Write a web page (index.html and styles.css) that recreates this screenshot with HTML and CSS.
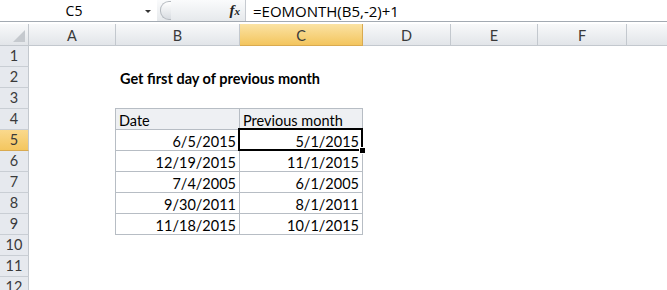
FILE: index.html
```html
<!DOCTYPE html>
<html lang="en">
  <head>
    <meta charset="UTF-8" />
    <title>EOMONTH - first day of previous month</title>
    <link rel="stylesheet" href="styles.css">
  </head>
  <body>
    <div class="formula-bar">
      <div class="name-box">
        <span class="ref">C5</span>
        <span class="arrow"></span>
      </div>
      <div class="fx-area">
        <span class="grip"></span>
        <span class="fx"><i>f</i><small>x</small></span>
      </div>
      <div class="formula">=EOMONTH(B5,-2)+1</div>
    </div>

    <div class="sheet">
      <div class="corner"><span class="corner-mark"></span></div>
      <div class="col-head">A</div>
      <div class="col-head">B</div>
      <div class="col-head active">C</div>
      <div class="col-head">D</div>
      <div class="col-head">E</div>
      <div class="col-head">F</div>
      <div class="col-head"></div>

      <div class="row-head">1</div>
      <div class="row-head">2</div>
      <div class="row-head">3</div>
      <div class="row-head">4</div>
      <div class="row-head active">5</div>
      <div class="row-head">6</div>
      <div class="row-head">7</div>
      <div class="row-head">8</div>
      <div class="row-head">9</div>
      <div class="row-head">10</div>
      <div class="row-head">11</div>
      <div class="row-head">12</div>

      <div class="title">Get first day of previous month</div>

      <div class="data">
        <div class="cell head">Date</div>
        <div class="cell head">Previous month</div>
        <div class="cell num">6/5/2015</div>
        <div class="cell num selected">5/1/2015</div>
        <div class="cell num">12/19/2015</div>
        <div class="cell num">11/1/2015</div>
        <div class="cell num">7/4/2005</div>
        <div class="cell num">6/1/2005</div>
        <div class="cell num">9/30/2011</div>
        <div class="cell num">8/1/2011</div>
        <div class="cell num">11/18/2015</div>
        <div class="cell num">10/1/2015</div>
      </div>
    </div>
  </body>
</html>
```

FILE: styles.css
```css
body {
  margin: 0;
  padding: 0;
  width: 667px;
  height: 290px;
  overflow: hidden;
  background: #fff;
  color: #000;
  font-family: Lato, "Open Sans", sans-serif;
  font-size: 14.5px;
}

/* formula bar */

.formula-bar {
  display: flex;
  height: 21px;
  border-bottom: 1px solid #a3aab2;
  margin-bottom: 2px;
  font-family: "Open Sans", Lato, sans-serif;
  font-size: 15px;
}

.name-box {
  display: flex;
  align-items: center;
  width: 157px;
  font-size: 14px;
}

.ref {
  flex: 1;
  text-align: center;
  padding-left: 3px;
}

.arrow {
  width: 0;
  height: 0;
  border-left: 3px solid transparent;
  border-right: 3px solid transparent;
  border-top: 3px solid #333;
  margin: 2px 6px 0 0;
}

.fx-area {
  display: flex;
  align-items: center;
  width: 88px;
  background: linear-gradient(#fafbfc, #e6e9ec);
  border-right: 1px solid #c6cad0;
}

.grip {
  width: 10px;
  height: 17px;
  margin-left: 3px;
  border: 1px solid #b4b9bf;
  border-right: none;
  border-radius: 9px 0 0 9px;
  background: linear-gradient(#ffffff, #d8dce1);
}

.fx {
  margin-left: auto;
  margin-right: 5px;
  font-family: "Liberation Serif", serif;
  font-weight: bold;
  font-size: 15px;
  color: #222;
}

.fx small {
  font-size: 11px;
  font-style: italic;
}

.formula {
  display: flex;
  align-items: center;
  padding-left: 7px;
}

/* sheet */

.sheet {
  display: grid;
  grid-template-columns: 29px 87px 124px 123px 88px 87px 89px 89px;
  grid-template-rows: 22px repeat(12, 21px);
}

.corner,
.col-head {
  box-sizing: border-box;
  border-right: 1px solid #c3c8ce;
  border-bottom: 1px solid #c3c8ce;
  background: linear-gradient(#f8f9fa, #e2e5e9);
}

.corner {
  position: relative;
}

.corner-mark {
  position: absolute;
  right: 3px;
  bottom: 3px;
  width: 0;
  height: 0;
  border-left: 12px solid transparent;
  border-bottom: 12px solid #c5c9ce;
}

.col-head {
  padding-top: 4px;
  line-height: 16px;
  text-align: center;
  color: #3a3a3a;
}

.col-head.active {
  background: linear-gradient(#fbe3a4, #f3c55e);
  border-right-color: #d9aa50;
  border-bottom-color: #d9aa50;
}

.row-head {
  grid-column: 1;
  box-sizing: border-box;
  border-right: 1px solid #c3c8ce;
  border-bottom: 1px solid #c9ced4;
  background: #e6e9ee;
  line-height: 20px;
  text-align: center;
  color: #3a3a3a;
}

.row-head.active {
  background: linear-gradient(#fad98d, #f4c65f);
  border-bottom-color: #d9aa50;
}

.title {
  grid-column: 3 / 6;
  grid-row: 3;
  padding: 4px 0 0 4px;
  line-height: 16px;
  font-weight: bold;
}

.data {
  grid-column: 3 / 5;
  grid-row: 5 / 11;
  display: grid;
  grid-template-columns: 124px 123px;
  grid-auto-rows: 21px;
  margin: -1px 0 0 -1px;
  border-top: 1px solid #b7bdc4;
  border-left: 1px solid #b7bdc4;
}

.cell {
  position: relative;
  box-sizing: border-box;
  padding: 4px 3px 0;
  line-height: 16px;
  border-right: 1px solid #b7bdc4;
  border-bottom: 1px solid #b7bdc4;
  white-space: nowrap;
}

.cell.head {
  background: #eef0f3;
}

.cell.num {
  text-align: right;
}

.selected::after {
  content: "";
  position: absolute;
  left: -2px;
  top: -2px;
  right: -1px;
  bottom: -1px;
  border: 2px solid #000;
}

.selected::before {
  content: "";
  position: absolute;
  right: -4px;
  bottom: -4px;
  width: 5px;
  height: 5px;
  background: #000;
  border: 1px solid #fff;
  z-index: 1;
}
```
